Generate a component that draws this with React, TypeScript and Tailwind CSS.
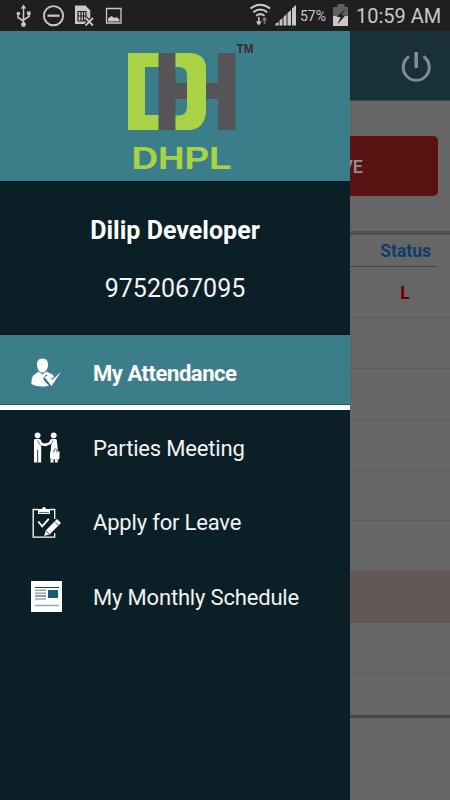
import React from "react";

function StatusBar() {
  return (
    <header className="flex h-[31px] shrink-0 items-center bg-[#1f1f1f] text-[#c8c8c8]">
      <svg width="225" height="31" viewBox="0 0 225 31" fill="none" stroke="#c8c8c8">
        <path d="M23.5 7v17M18 13v4.5l5.5 3.5M29 13v3.5L23.5 20" strokeWidth="1.5" />
        <path d="M23.5 4.5l-2.7 4h5.4z" fill="#c8c8c8" stroke="none" />
        <circle cx="23.5" cy="24.5" r="2.4" fill="#c8c8c8" stroke="none" />
        <circle cx="18.4" cy="13.5" r="1.8" fill="#c8c8c8" stroke="none" />
        <path d="M27 11.5h3.5v3.5H27z" fill="#c8c8c8" stroke="none" />
        <circle cx="53.5" cy="15.7" r="9.6" strokeWidth="1.9" />
        <path d="M47.5 15.7h12" strokeWidth="2.2" />
        <path d="M75 5.5h10.5l4.8 5V24H75z" fill="#c8c8c8" stroke="none" />
        <path d="M78 11.5h8v9.500h-8zM81 12v9M83.500 12v9M78 16h8" stroke="#1f1f1f" strokeWidth="1.2" />
        <path d="M85.500 18l7.500 7.500M93 18l-7.500 7.500" stroke="#1f1f1f" strokeWidth="4" />
        <path d="M85.500 18l7.500 7.500M93 18l-7.500 7.500" strokeWidth="1.8" />
        <path d="M106.500 8.500h14.500v14.500h-14.500z" strokeWidth="1.3" />
        <path d="M108 21.500v-3l3.500-2.500 3 2 2-1 3 2.500v2z" fill="#c8c8c8" stroke="none" />
      </svg>
      <svg width="75" height="31" viewBox="225 0 75 31" fill="none" stroke="#c8c8c8">
        <path d="M250.500 8.500q9.800-7.500 19.600 0M253.300 12.200q7-5.400 14 0M256.200 15.700q4.100-3.200 8.200 0" strokeWidth="2" />
        <path d="M258.800 17v6" strokeWidth="1.600" />
        <path d="M255.800 21.500h6l-3 4z" fill="#c8c8c8" stroke="none" />
        <path d="M264.500 24v-5" stroke="#777" strokeWidth="1.600" />
        <path d="M261.700 20.500h5.600l-2.800-4z" fill="#777" stroke="none" />
        <path d="M275.500 25.500v-2l3-1.500v3.500zM279.500 25.500v-5l3-2.500v7.500zM283.500 25.500v-8.500l3-3v11.500zM287.500 25.500v-12.500l3.500-3v15.500zM292 25.500v-17l4-3.500v20.500z" fill="#c8c8c8" stroke="none" />
      </svg>
      <span className="w-[32px] whitespace-nowrap pt-px text-[14px]">57%</span>
      <svg width="24" height="31" viewBox="332 0 24 31">
        <path d="M337.500 4h7v3h-7zM333 7h15v10h-15z" fill="#606060" />
        <path d="M333 16h15v10h-15z" fill="#c8c8c8" />
        <path d="M345.500 9l-9 8h4.200l-3.400 7.500 8.200-9.200h-4.300z" fill="#1f1f1f" />
      </svg>
      <span className="whitespace-nowrap text-[20px]">10:59 AM</span>
    </header>
  );
}

function Logo() {
  return (
    <svg width="350" height="150" viewBox="0 31 350 150">
      <path d="M128 53h31v14h-14v48h14v15h-31z" fill="#a9d246" />
      <path d="M175 83h43v16h-43zM218 53h17.500v77H218zM158.500 53h17v77h-17z" fill="#555557" />
      <path fillRule="evenodd" d="M175.500 53h15q14.500 1 15.500 14v46q-2 15-15 17h-15.500v-14.500h4q7-.5 7.500-8v-33q-.5-7-7.500-7.500h-4z" fill="#a9d246" />
      <text x="236.500" y="53" fontSize="12.500" fontWeight="700" textLength="17" lengthAdjust="spacingAndGlyphs" fill="#3b2c2c" fontFamily="Liberation Sans, sans-serif">TM</text>
      <text x="131.500" y="168.500" fontSize="30.500" fontWeight="700" textLength="100" lengthAdjust="spacingAndGlyphs" fill="#a9d246" fontFamily="Liberation Sans, sans-serif">DHPL</text>
    </svg>
  );
}

function AttendanceIcon() {
  return (
    <svg className="mt-[5px]" width="34" height="34" viewBox="30 356 34 34">
      <path d="M42.500 358.500c4 0 5.700 2.800 5.500 6.700-.2 4-2.500 7.300-5.500 7.300s-5.300-3.300-5.500-7.300c-.2-3.900 1.500-6.700 5.500-6.700z" fill="#fff" />
      <path d="M38.500 371.500l4 3 4-3c3 2.200 7 1.700 8 6.500v6q-6 2.500-12 2.500-7 0-11-2.500c0-5 .5-8.500 4-10z" fill="#fff" />
      <path d="M43 378.500l3.200-4 5.300 4.500L61 371v7l-9 10-4-1z" fill="#3b7e8a" />
      <path d="M44.500 377l3.500-1.500 4 4.500 9-8-9.500 14z" fill="#fff" />
      <path d="M44 381l5 4.500-6 1z" fill="#fff" />
    </svg>
  );
}

function MeetingIcon() {
  return (
    <svg width="34" height="34" viewBox="30 430.500 34 34" fill="#fff">
      <circle cx="37.600" cy="434.800" r="2.900" />
      <circle cx="53.700" cy="434.800" r="2.900" />
      <path d="M34 439q3.500-1.500 6.500 0l1.500 3.300 4 1v2.400l-4.800-.7v17h-3.100v-13h-.8v13H34z" />
      <path d="M50.500 439q3-1.500 6.200 0l1 9v3H59v8h-8.300v-8.500l.6-7-5.800 2.300-.5-2.500 4-1.500z" />
      <path d="M50.500 459h3v3h-3zM55 459h2.700v3H55zM50 451h9.500v7H50z" />
      <path d="M54 452v-2.500q1.200-2 3 0v2.500" fill="none" stroke="#0a2026" strokeWidth=".7" />
      <path d="M37.500 440l3 5M53 440l-2 4" stroke="#0a2026" strokeWidth=".6" />
    </svg>
  );
}

function LeaveIcon() {
  return (
    <svg width="34" height="34" viewBox="30 505 34 34" fill="none" stroke="#fff">
      <path d="M38 508.500h-4.800v27.700h21.500v-4M54.700 518v-9.500H50" strokeWidth="1.300" />
      <path d="M38 508h4q.3-2 2-2t2 2h4v5H38z" fill="#fff" stroke="none" />
      <path d="M39 511.600h10" stroke="#0a2026" strokeWidth=".7" />
      <path d="M38.200 520.500l4 4.800 6.600-7.500" strokeWidth="1.900" />
      <path d="M57 518l4 4-11.500 11.500-5.300 1.500 1.500-5.500z" fill="#fff" stroke="none" />
      <path d="M54.800 520.500l4 4M45.800 529.800l3.300 3.300" stroke="#0a2026" strokeWidth=".7" />
    </svg>
  );
}

function ScheduleIcon() {
  return (
    <svg width="34" height="34" viewBox="30 579.500 34 34">
      <path d="M31 580.500h31v31H31z" fill="#fff" />
      <path d="M35 587h24M35 595.500h11" stroke="#164955" />
      <path d="M35 589.700h11M35 592.700h11M35 598.500h11M35 605h24" stroke="#92abb2" strokeWidth="1.500" />
      <path d="M48 589.500h10v8H48z" fill="#145f6d" />
    </svg>
  );
}

function MenuItem({ icon, children }: { icon: React.ReactNode; children: React.ReactNode }) {
  return (
    <button className="flex h-[74.5px] w-full items-center pl-[30px] pt-[2px] text-left text-[22px] tracking-[-0.18px] text-[#f3f3f3]">
      {icon}
      <span className="ml-[29px] whitespace-nowrap">{children}</span>
    </button>
  );
}

function Drawer() {
  return (
    <aside className="relative z-10 flex w-[350px] shrink-0 flex-col bg-[#0a2026]">
      <div className="h-[150px] bg-[#3b7e8a]">
        <Logo />
      </div>
      <section className="flex h-[154px] flex-col items-center border-y border-[#03151a] pt-[32px] text-white">
        <h1 className="whitespace-nowrap text-[25px] font-bold leading-[34px] tracking-[0.02px]">Dilip Developer</h1>
        <p className="mt-[24px] text-[25px] leading-[34px] text-[#f5f5f5]">9752067095</p>
      </section>
      <nav>
        <button className="flex h-[75px] w-full items-center border-b-[5px] border-white bg-[#3b7e8a] pl-[30px] text-left text-[22px] font-bold tracking-[-0.45px] text-white shadow-[inset_0_-1px_0_#17616d]">
          <AttendanceIcon />
          <span className="ml-[29px] mt-[7px] whitespace-nowrap">My Attendance</span>
        </button>
        <MenuItem icon={<MeetingIcon />}>Parties Meeting</MenuItem>
        <MenuItem icon={<LeaveIcon />}>Apply for Leave</MenuItem>
        <MenuItem icon={<ScheduleIcon />}>My Monthly Schedule</MenuItem>
      </nav>
    </aside>
  );
}

function AttendancePage() {
  return (
    <main className="flex w-[100px] flex-col bg-[#666]">
      <div className="flex h-[70px] shrink-0 justify-center border-b border-[#28535c] bg-[#183138] pl-8 pt-[20px]">
        <svg width="32" height="32" viewBox="400 51 32 32" fill="none" stroke="#858c8e" strokeWidth="3">
          <path d="M409 56.500a13 13 0 1 0 14.500 0" />
          <path d="M416.200 52v16" strokeWidth="3.600" />
        </svg>
      </div>
      <div className="h-[130px] shrink-0 pt-[35px]">
        <button className="flex h-[60px] w-[88px] items-center justify-end rounded-r-[5px] border border-l-0 border-[#6b0b0b] bg-[#581412] pr-[74px] text-[18px] font-medium text-[#929292]">
          <span className="whitespace-nowrap">LEAVE</span>
        </button>
      </div>
      <div className="h-[4px] shrink-0 bg-[#505050]" />
      <div className="flex h-[32px] w-[87px] shrink-0 items-center justify-end border-b border-[#454545] pr-[6px] pt-[2px] text-[17.5px] font-bold text-[#0d3d6b]">Status</div>
      <div className="flex h-[51px] shrink-0 items-center justify-center border-b border-[#5d5d5d] pl-[10px] pt-[3px] text-[17.5px] font-bold text-[#6b0000]">L</div>
      <div className="h-[51px] shrink-0 border-b border-[#5d5d5d]" />
      <div className="h-[51px] shrink-0 border-b border-[#5d5d5d]" />
      <div className="h-[51px] shrink-0 border-b border-[#606060]" />
      <div className="h-[50px] shrink-0 border-b border-[#5d5d5d]" />
      <div className="h-[50px] shrink-0" />
      <div className="h-[52px] shrink-0 border-b border-[#5d5757] bg-[#645757]" />
      <div className="h-[51px] shrink-0 border-b border-[#5d5d5d]" />
      <div className="h-[41px] shrink-0" />
      <div className="h-[3px] shrink-0 bg-[#484848]" />
    </main>
  );
}

export default function App() {
  return (
    <div className="flex h-[800px] w-[450px] flex-col overflow-hidden font-['Roboto',sans-serif]">
      <StatusBar />
      <div className="flex min-h-0 flex-1">
        <Drawer />
        <AttendancePage />
      </div>
    </div>
  );
}
